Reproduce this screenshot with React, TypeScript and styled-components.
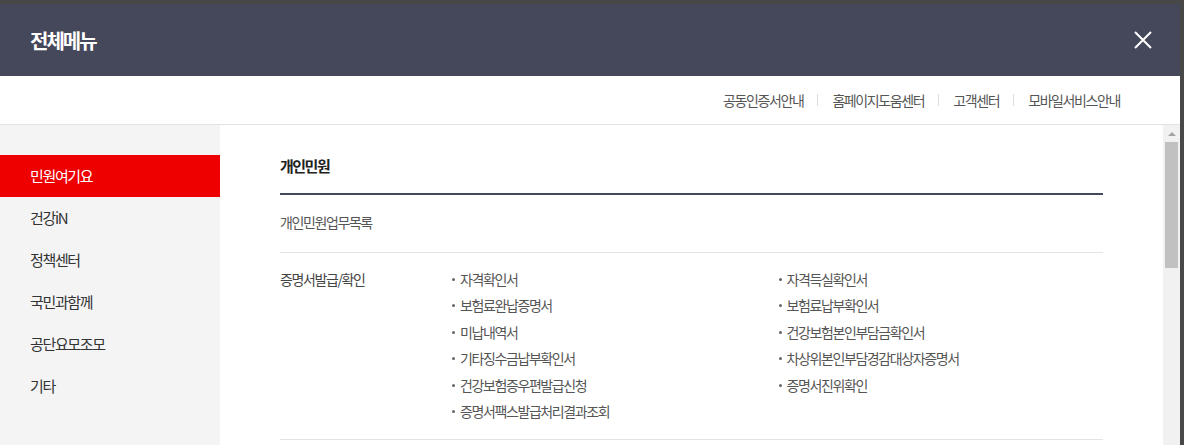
import React from 'react'
import styled, { createGlobalStyle } from 'styled-components'

const GlobalStyle = createGlobalStyle`
  html, body {
    margin: 0;
    padding: 0;
    background: #484848;
    overflow: hidden;
  }
  * {
    box-sizing: border-box;
  }
  body {
    font-family: 'Noto Sans CJK KR', 'Noto Sans', sans-serif;
  }
`

const sideMenus = ['민원여기요', '건강iN', '정책센터', '국민과함께', '공단요모조모', '기타']
const utilLinks = ['공동인증서안내', '홈페이지도움센터', '고객센터', '모바일서비스안내']

const leftItems = [
  '자격확인서',
  '보험료완납증명서',
  '미납내역서',
  '기타징수금납부확인서',
  '건강보험증우편발급신청',
  '증명서팩스발급처리결과조회'
]
const rightItems = [
  '자격득실확인서',
  '보험료납부확인서',
  '건강보험본인부담금확인서',
  '차상위본인부담경감대상자증명서',
  '증명서진위확인'
]

const App = () => {
  return (
    <Page>
      <GlobalStyle />
      <Modal>
        <Header>
          <Title>전체메뉴</Title>
          <CloseButton type='button' aria-label='닫기'>
            <svg width='20' height='20' viewBox='0 0 20 20'>
              <path d='M2 2 L18 18 M18 2 L2 18' stroke='#fff' strokeWidth='2' fill='none' />
            </svg>
          </CloseButton>
        </Header>

        <UtilBar>
          {utilLinks.map((link, i) => (
            <React.Fragment key={link}>
              {i > 0 && <Sep />}
              <UtilLink>{link}</UtilLink>
            </React.Fragment>
          ))}
        </UtilBar>

        <Body>
          <Side>
            {sideMenus.map((menu, i) => (
              <SideItem key={menu} $active={i === 0}>
                {menu}
              </SideItem>
            ))}
          </Side>

          <Content>
            <SectionTitle>개인민원</SectionTitle>
            <PlainRow>개인민원업무목록</PlainRow>
            <CategoryRow>
              <CategoryLabel>증명서발급/확인</CategoryLabel>
              <Columns>
                <ItemList>
                  {leftItems.map((item) => (
                    <Item key={item}>{item}</Item>
                  ))}
                </ItemList>
                <ItemList>
                  {rightItems.map((item) => (
                    <Item key={item}>{item}</Item>
                  ))}
                </ItemList>
              </Columns>
            </CategoryRow>
          </Content>

          <ScrollTrack>
            <ScrollArrow />
            <ScrollThumb />
          </ScrollTrack>
        </Body>
      </Modal>
    </Page>
  )
}

export default App

const Page = styled.div`
  width: 1184px;
  height: 445px;
  padding-top: 4px;
`

const Modal = styled.div`
  width: 1180px;
  height: 441px;
  background: #fff;
  display: flex;
  flex-direction: column;
  overflow: hidden;
`

const Header = styled.div`
  height: 72px;
  flex-shrink: 0;
  background: #45475a;
  display: flex;
  align-items: center;
  justify-content: space-between;
  padding: 0 27px 0 30px;
`

const Title = styled.h1`
  margin: 0;
  font-size: 20px;
  font-weight: 700;
  color: #fff;
  letter-spacing: -0.1em;
`

const CloseButton = styled.button`
  border: none;
  background: none;
  padding: 0;
  width: 20px;
  height: 20px;
  display: flex;
  cursor: pointer;
`

const UtilBar = styled.div`
  height: 49px;
  flex-shrink: 0;
  border-bottom: 1px solid #e3e3e6;
  display: flex;
  align-items: center;
  justify-content: flex-end;
  padding-right: 60px;
`

const UtilLink = styled.a`
  font-size: 14px;
  color: #555;
  letter-spacing: -0.1em;
  text-decoration: none;
`

const Sep = styled.span`
  width: 1px;
  height: 12px;
  background: #ddd;
  margin: 0 14px;
`

const Body = styled.div`
  flex: 1;
  display: grid;
  grid-template-columns: 220px 1fr 17px;
  min-height: 0;
`

const Side = styled.ul`
  list-style: none;
  margin: 0;
  padding: 30px 0 0;
  background: #f4f4f5;
`

const SideItem = styled.li<{ $active?: boolean }>`
  height: 42px;
  line-height: 42px;
  padding-left: 30px;
  font-size: 15px;
  letter-spacing: -0.09em;
  color: ${(p) => (p.$active ? '#fff' : '#333')};
  background: ${(p) => (p.$active ? '#ee0000' : 'transparent')};
`

const Content = styled.div`
  padding: 30px 60px 0;
  overflow: hidden;
`

const SectionTitle = styled.h2`
  margin: 0;
  font-size: 15px;
  font-weight: 700;
  color: #222;
  line-height: 22px;
  letter-spacing: -0.1em;
  padding-bottom: 16px;
  border-bottom: 2px solid #45475a;
`

const PlainRow = styled.div`
  font-size: 14px;
  color: #555;
  line-height: 22px;
  letter-spacing: -0.1em;
  padding: 16px 0 19px;
  border-bottom: 1px solid #e3e3e8;
`

const CategoryRow = styled.div`
  display: grid;
  grid-template-columns: 170px 1fr;
  padding: 13px 0 15px;
  border-bottom: 1px solid #e3e3e8;
`

const CategoryLabel = styled.div`
  font-size: 14px;
  color: #444;
  line-height: 26.4px;
  letter-spacing: -0.1em;
`

const Columns = styled.div`
  display: grid;
  grid-template-columns: 1fr 1fr;
`

const ItemList = styled.ul`
  list-style: none;
  margin: 0;
  padding: 0;
`

const Item = styled.li`
  position: relative;
  padding-left: 10px;
  font-size: 14px;
  color: #555;
  line-height: 26.4px;
  letter-spacing: -0.1em;

  &::before {
    content: '';
    position: absolute;
    left: 2px;
    top: 12px;
    width: 3px;
    height: 3px;
    border-radius: 50%;
    background: #666;
  }
`

const ScrollTrack = styled.div`
  background: #f1f1f1;
  display: flex;
  flex-direction: column;
  align-items: center;
`

const ScrollArrow = styled.div`
  margin-top: 7px;
  width: 0;
  height: 0;
  border-left: 4px solid transparent;
  border-right: 4px solid transparent;
  border-bottom: 4px solid #a3a3a3;
`

const ScrollThumb = styled.div`
  margin-top: 6px;
  width: 13px;
  height: 126px;
  background: #c1c1c1;
`
